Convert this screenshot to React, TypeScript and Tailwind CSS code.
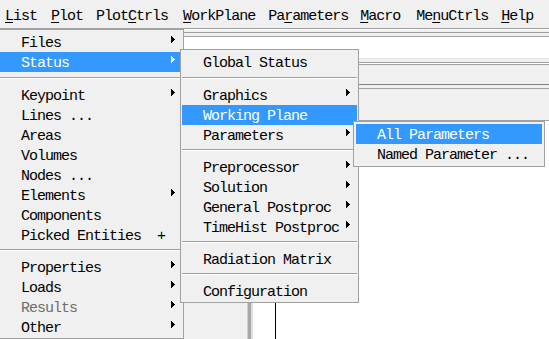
import React from "react";

const font = "font-['Liberation_Mono','DejaVu_Sans_Mono',monospace] text-[15px] tracking-[-1px]";

function Arrow({ white }: { white?: boolean }) {
  return (
    <svg width="4" height="7" viewBox="0 0 4 7" shapeRendering="crispEdges" className="absolute right-[7px] top-[4px]">
      <path d="M0 0h1v7H0zM1 1h1v5H1zM2 2h1v3H2zM3 3h1v1H3z" fill={white ? "#ffffff" : "#000000"} />
    </svg>
  );
}

function Item({ label, arrow, active, disabled }: { label: string; arrow?: boolean; active?: boolean; disabled?: boolean }) {
  const color = active ? "bg-[#3399ff] text-white" : disabled ? "text-[#6d6d6d]" : "text-black";
  return (
    <div className={`relative h-[20px] leading-[23px] pl-[21px] whitespace-pre ${color}`}>
      {label}
      {arrow && <Arrow white={active} />}
    </div>
  );
}

function Sep({ big }: { big?: boolean }) {
  return (
    <div className={big ? "h-[13px] pt-[5px]" : "h-[12px] pt-[4px]"}>
      <div className="h-[1px] bg-[#a0a0a0]" />
      <div className="h-[1px] bg-white" />
    </div>
  );
}

export default function App() {
  return (
    <div className={`relative w-[549px] h-[339px] overflow-hidden bg-white flex flex-col ${font}`}>
      {/* menu bar */}
      <div className="flex h-[28px] shrink-0 bg-[#f0f0f0] pt-[3px] leading-[27px] text-black whitespace-pre">
        <span className="ml-[5px]"><u className="underline underline-offset-[2px]">L</u>ist</span>
        <span className="ml-[14px]"><u className="underline underline-offset-[2px]">P</u>lot</span>
        <span className="ml-[13px]">Plot<u className="underline underline-offset-[2px]">C</u>trls</span>
        <span className="ml-[15px]"><u className="underline underline-offset-[2px]">W</u>orkPlane</span>
        <span className="ml-[13px]">Pa<u className="underline underline-offset-[2px]">r</u>ameters</span>
        <span className="ml-[12px]"><u className="underline underline-offset-[2px]">M</u>acro</span>
        <span className="ml-[16px]">Me<u className="underline underline-offset-[2px]">n</u>uCtrls</span>
        <span className="ml-[13px]"><u className="underline underline-offset-[2px]">H</u>elp</span>
      </div>

      {/* toolbar stripes */}
      <div className="h-[1px] shrink-0 bg-[#a0a0a0]" />
      <div className="h-[1px] shrink-0 bg-white" />
      <div className="h-[2px] shrink-0 bg-[#f0f0f0]" />
      <div className="h-[1px] shrink-0 bg-[#a0a0a0]" />
      <div className="h-[3px] shrink-0 bg-[#f0f0f0]" />
      <div className="h-[22px] shrink-0 bg-white border-t border-[#a0a0a0]" />
      <div className="h-[1px] shrink-0 bg-[#e3e3e3]" />
      <div className="h-[3px] shrink-0 bg-[#f0f0f0]" />
      <div className="h-[1px] shrink-0 bg-[#a0a0a0]" />
      <div className="h-[1px] shrink-0 bg-white" />
      <div className="h-[1px] shrink-0 bg-[#a0a0a0]" />
      <div className="h-[19px] shrink-0 bg-[#f0f0f0]" />
      <div className="h-[1px] shrink-0 bg-[#808080]" />
      <div className="h-[3px] shrink-0 bg-[#f0f0f0]" />
      <div className="h-[1px] shrink-0 bg-[#a0a0a0]" />
      <div className="h-[31px] shrink-0 bg-[#f0f0f0]" />
      <div className="h-[1px] shrink-0 bg-[#a0a0a0]" />

      {/* lower area */}
      <div className="flex flex-1">
        <div className="w-[247px] bg-[#f0f0f0]" />
        <div className="w-[1px] bg-[#d0d0d0]" />
        <div className="w-[3px] bg-[#a8a8a8]" />
        <div className="w-[2px] bg-[#e0e0e0]" />
        <div className="flex-1 bg-white flex">
          <div className="ml-[22px] w-[1px] bg-black" />
        </div>
      </div>

      {/* List menu */}
      <div className="absolute left-[-2px] top-[29px] w-[186px] border border-[#a0a0a0] bg-[#f0f0f0] pt-[2px] px-[1px] pb-[1px]">
        <Item label="Files" arrow />
        <Item label="Status" arrow active />
        <Sep big />
        <Item label="Keypoint" arrow />
        <Item label="Lines ..." />
        <Item label="Areas" />
        <Item label="Volumes" />
        <Item label="Nodes ..." />
        <Item label="Elements" arrow />
        <Item label="Components" />
        <Item label="Picked Entities  +" />
        <Sep />
        <Item label="Properties" arrow />
        <Item label="Loads" arrow />
        <Item label="Results" arrow disabled />
        <Item label="Other" arrow />
      </div>

      {/* Status submenu */}
      <div className="absolute left-[180px] top-[49px] w-[179px] border border-[#a0a0a0] bg-[#f0f0f0] pt-[2px] px-[1px] pb-[1px]">
        <Item label="Global Status" />
        <Sep big />
        <Item label="Graphics" arrow />
        <Item label="Working Plane" active />
        <Item label="Parameters" arrow />
        <Sep />
        <Item label="Preprocessor" arrow />
        <Item label="Solution" arrow />
        <Item label="General Postproc" arrow />
        <Item label="TimeHist Postproc" arrow />
        <Sep />
        <Item label="Radiation Matrix" />
        <Sep />
        <Item label="Configuration" />
      </div>

      {/* Parameters submenu */}
      <div className="absolute left-[353px] top-[121px] w-[192px] border border-[#a0a0a0] bg-[#f0f0f0] pt-[2px] px-[2px] pb-[2px]">
        <Item label="All Parameters" active />
        <Item label="Named Parameter ..." />
      </div>
    </div>
  );
}
